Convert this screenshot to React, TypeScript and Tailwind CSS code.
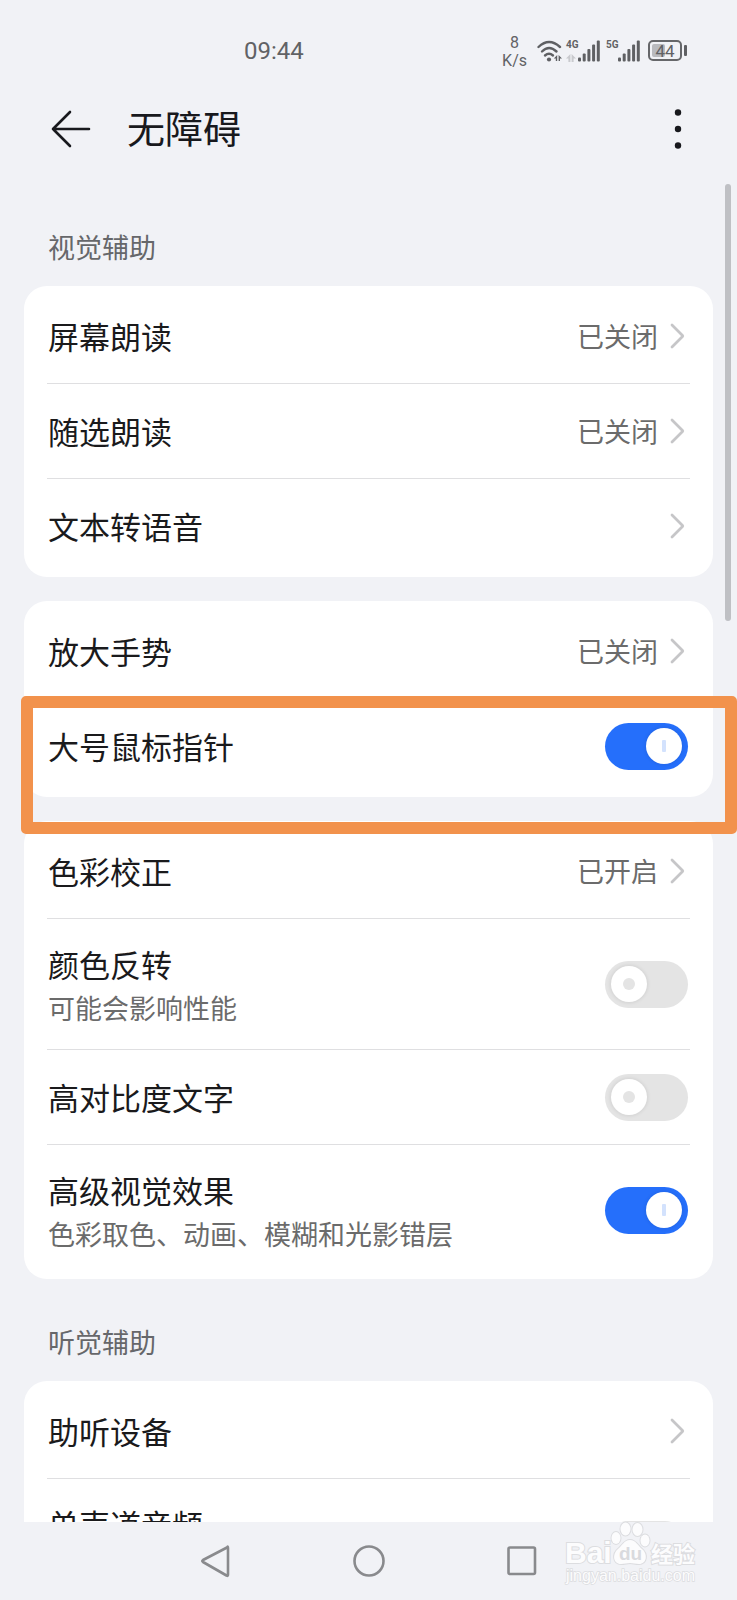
import { ReactNode, useState } from 'react';

interface RowProps {
  label: string;
  hint?: string;
  last?: boolean;
}

interface LinkRowProps extends RowProps {
  value?: string;
}

interface SwitchRowProps extends RowProps {
  defaultOn?: boolean;
}

const rowClass = 'mx-[23px] flex items-center px-px text-left';

function RowText({ label, hint }: { label: string; hint?: string }) {
  return (
    <span className="flex flex-1 flex-col">
      <span className="text-[31px] leading-[48px] text-[#1a1a1c]">{label}</span>
      {hint ? (
        <span className="text-[27px] leading-[40px] text-[#6b6b6b]">{hint}</span>
      ) : null}
    </span>
  );
}

function Divider() {
  return <div className="mx-[23px] h-px bg-[#dfdfe1]" />;
}

function LinkRow({ label, hint, value, last }: LinkRowProps) {
  return (
    <>
      <button type="button" className={`${rowClass} h-[94px] self-stretch`}>
        <RowText label={label} hint={hint} />
        {value ? (
          <span className="mr-[11px] text-[27px] leading-[40px] text-[#6b6b6b]">
            {value}
          </span>
        ) : null}
        <svg className="mr-1 h-7 w-4" viewBox="0 0 16 28" fill="none">
          <path
            d="M3 3 L13.5 13.5 Q14 14 13.5 14.5 L3 25"
            stroke="#c6c6c8"
            strokeWidth="2.8"
            strokeLinecap="round"
          />
        </svg>
      </button>
      {last ? null : <Divider />}
    </>
  );
}

function SwitchRow({ label, hint, defaultOn = false, last }: SwitchRowProps) {
  const [on, setOn] = useState(defaultOn);

  return (
    <>
      <label className={`${rowClass} ${hint ? 'h-[130px]' : 'h-[94px]'}`}>
        <RowText label={label} hint={hint} />
        <span className="relative mr-px flex">
          <input
            type="checkbox"
            role="switch"
            checked={on}
            onChange={(e) => setOn(e.target.checked)}
            className="h-[47px] w-[83px] appearance-none rounded-full bg-[#e4e4e4] checked:bg-[#256ffb]"
          />
          {/* 스위치 손잡이 */}
          <span
            className={`pointer-events-none absolute top-[5px] flex h-9 w-9 items-center justify-center rounded-full bg-white shadow-[0_0_4px_rgba(0,0,0,0.12)] ${
              on ? 'right-1.5' : 'left-1.5'
            }`}
          >
            <span
              className={
                on
                  ? 'h-3 w-1 rounded-[1px] bg-[#d3e2fd]'
                  : 'h-3 w-3 rounded-full bg-[#e4e4e4]'
              }
            />
          </span>
        </span>
      </label>
      {last ? null : <Divider />}
    </>
  );
}

function Card({ children }: { children: ReactNode }) {
  return (
    <div className="mx-6 flex flex-col rounded-[23px] bg-white pt-[3px] pb-1">
      {children}
    </div>
  );
}

function SectionTitle({ children }: { children: ReactNode }) {
  return (
    <h2 className="px-12 pt-[43px] pb-[19px] text-[27px] leading-[40px] text-[#66676a]">
      {children}
    </h2>
  );
}

function SignalBars() {
  return (
    <svg className="h-[22px] w-[22px]" viewBox="0 0 22 22" fill="#5f6063">
      <rect x="0" y="17.5" width="3" height="4" rx="1" />
      <rect x="4.7" y="13.5" width="3" height="8" rx="1" />
      <rect x="9.4" y="9" width="3" height="12.5" rx="1" />
      <rect x="14.1" y="4.5" width="3" height="17" rx="1" />
      <rect x="18.8" y="0.5" width="3" height="21" rx="1" />
    </svg>
  );
}

function StatusBar() {
  return (
    <div className="flex h-[101px] items-center justify-end pr-[50px] font-[Roboto,sans-serif] text-[#616265]">
      <span className="flex-1 pl-[244px] text-2xl leading-6">09:44</span>
      <span className="mt-0.5 mr-[10px] flex flex-col text-center text-base leading-[18px]">
        <span>8</span>
        <span>K/s</span>
      </span>
      <svg className="mr-1 h-6 w-[25px]" viewBox="0 0 25 24" fill="none">
        <g stroke="#5f6063" strokeWidth="2.4" strokeLinecap="round">
          <path d="M1.5 8 Q12 -2 23 8" />
          <path d="M5 12.5 Q12 5.5 19.5 12.5" />
          <path d="M8 16.5 Q12 12.8 16 16.5" />
        </g>
        <circle cx="12" cy="20.5" r="2.1" fill="#5f6063" />
        {/* 데이터 송수신 화살표 */}
        <path
          d="M20.2 16 V22 H18.8 V19.4 H16.8 Z M21.6 22 V16 L25 19.4 H23 V22 Z"
          fill="#5f6063"
        />
      </svg>
      <span className="flex h-[22px] w-3 flex-col justify-between text-[10px] leading-[10px] font-bold">
        4G
        <svg className="h-2 w-2.5" viewBox="0 0 10 8" fill="#c9cace">
          <path d="M4.4 0 V8 H2.4 V4.500 H0 Z M5.6 8 V0 L10 4.500 H7.600 V8 Z" />
        </svg>
      </span>
      <SignalBars />
      <span className="ml-1.5 h-[22px] w-3 text-[10px] leading-[10px] font-bold">5G</span>
      <SignalBars />
      <span className="relative ml-2 flex h-[21px] w-[34px] items-center justify-center rounded-[5px] border-2 border-[#66676a] text-[17px] leading-4">
        <span className="absolute top-0.5 bottom-0.5 left-0.5 w-[13px] rounded-[2px] bg-[#b9babe]" />
        <span className="relative">44</span>
      </span>
      <span className="ml-0.5 h-[11px] w-[3px] rounded-[1px] bg-[#5f6063]" />
    </div>
  );
}

function Watermark() {
  return (
    <svg
      className="pointer-events-none absolute right-[35px] bottom-3 h-[70px] w-[140px]"
      viewBox="0 0 140 70"
      fill="#fcfcfd"
      stroke="#dcdde0"
      strokeWidth="2"
      paintOrder="stroke"
    >
      <text x="3" y="45" fontSize="30" fontWeight="700" fontFamily="Liberation Sans, sans-serif">
        Bai
      </text>
      <ellipse cx="54" cy="20" rx="4.500" ry="6" />
      <ellipse cx="63.500" cy="11" rx="5" ry="6.500" />
      <ellipse cx="75.500" cy="11.500" rx="5" ry="6.500" />
      <ellipse cx="83" cy="22.500" rx="4.500" ry="6" />
      <path d="M68 22 C74 22 76 28 80 31 C86 36 85 46 77 46 C73 46 71 45 68 45 C65 45 63 46 59 46 C51 46 50 36 56 31 C60 28 62 22 68 22 Z" />
      <text
        x="57"
        y="42"
        fontSize="19"
        fontWeight="700"
        fontFamily="Liberation Sans, sans-serif"
        fill="#d9dade"
        stroke="none"
      >
        du
      </text>
      <text x="89" y="44" fontSize="22" fontWeight="700" fontFamily="Noto Sans CJK SC, sans-serif">
        经验
      </text>
      <text x="4" y="63" fontSize="16" strokeWidth="1.500" fontFamily="Liberation Sans, sans-serif">
        jingyan.baidu.com
      </text>
    </svg>
  );
}

export default function App() {
  return (
    <div className="flex h-screen flex-col overflow-hidden bg-[#f1f2f6] font-[Noto_Sans_CJK_SC,sans-serif]">
      <StatusBar />

      <header className="mb-[27px] flex h-14 items-center pr-[46px] pl-[50px] text-[#18191d]">
        <button type="button" aria-label="返回">
          <svg className="h-[42px] w-[42px]" viewBox="0 0 42 42" fill="none">
            <path
              d="M20 4 L3 21 L20 38 M3 21 H39"
              stroke="currentColor"
              strokeWidth="2.600"
              strokeLinecap="round"
              strokeLinejoin="round"
            />
          </svg>
        </button>
        <h1 className="flex-1 pb-1 pl-[35px] text-[38px] leading-[52px]">无障碍</h1>
        <button type="button" aria-label="更多">
          <svg className="h-[42px] w-[26px]" viewBox="0 0 26 42" fill="currentColor">
            <circle cx="13" cy="4.500" r="3.200" />
            <circle cx="13" cy="21" r="3.200" />
            <circle cx="13" cy="37.500" r="3.200" />
          </svg>
        </button>
      </header>

      <main className="relative min-h-0 flex-1 overflow-hidden">
        {/* 스크롤바 */}
        <div className="absolute top-0 right-1.5 h-[437px] w-1.5 rounded-full bg-[#bfc0c4]" />

        <SectionTitle>视觉辅助</SectionTitle>
        <div className="flex flex-col gap-6">
          <Card>
            <LinkRow label="屏幕朗读" value="已关闭" />
            <LinkRow label="随选朗读" value="已关闭" />
            <LinkRow label="文本转语音" last />
          </Card>

          <div className="relative">
            <Card>
              <LinkRow label="放大手势" value="已关闭" />
              <SwitchRow label="大号鼠标指针" defaultOn last />
            </Card>
            {/* 강조 테두리 */}
            <div className="pointer-events-none absolute top-[95px] right-0 -bottom-[37px] left-[21px] z-10 rounded-[5px] border-[12px] border-[#f2924c]" />
          </div>

          <Card>
            <LinkRow label="色彩校正" value="已开启" />
            <SwitchRow label="颜色反转" hint="可能会影响性能" />
            <SwitchRow label="高对比度文字" />
            <SwitchRow
              label="高级视觉效果"
              hint="色彩取色、动画、模糊和光影错层"
              defaultOn
              last
            />
          </Card>
        </div>

        <SectionTitle>听觉辅助</SectionTitle>
        <Card>
          <LinkRow label="助听设备" />
          <SwitchRow label="单声道音频" hint={'\u00a0'} last />
        </Card>
      </main>

      <nav className="relative flex h-[78px] shrink-0 items-center justify-center gap-[119px]">
        <button type="button" aria-label="后退">
          <svg className="h-[34px] w-[34px]" viewBox="0 0 34 34" fill="none">
            <path
              d="M28 3.500 Q29 1.500 29 4 V30.500 Q29 32.500 27.500 31.500 L4 18 Q2.500 17 4 16 Z"
              stroke="#898a8d"
              strokeWidth="2.600"
              strokeLinejoin="round"
            />
          </svg>
        </button>
        <button type="button" aria-label="主页">
          <svg className="h-[34px] w-[34px]" viewBox="0 0 34 34" fill="none">
            <circle cx="17" cy="17" r="14.500" stroke="#898a8d" strokeWidth="2.600" />
          </svg>
        </button>
        <button type="button" aria-label="最近任务">
          <svg className="h-[34px] w-[34px]" viewBox="0 0 34 34" fill="none">
            <rect x="3.500" y="3.500" width="26.500" height="26.500" rx="1.500" stroke="#898a8d" strokeWidth="2.600" />
          </svg>
        </button>
        <Watermark />
      </nav>
    </div>
  );
}
